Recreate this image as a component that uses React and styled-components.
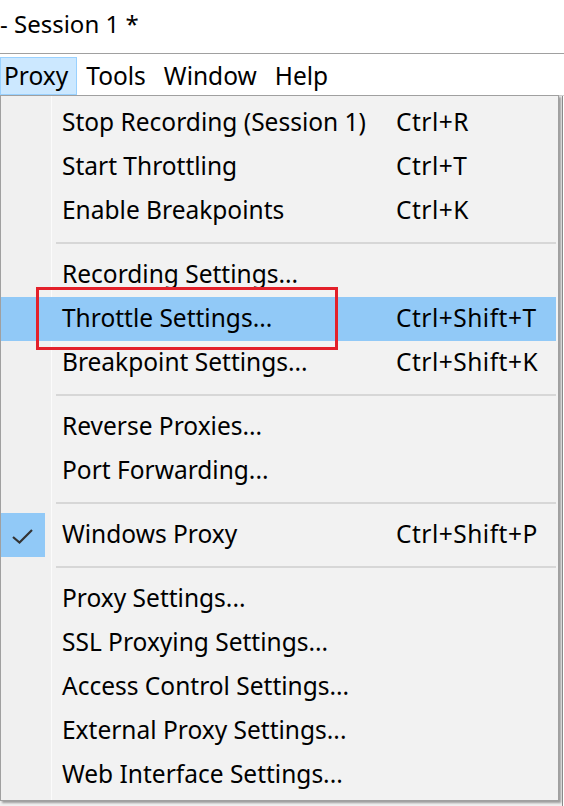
import React from "react";
import styled, { createGlobalStyle } from "styled-components";

const GlobalStyle = createGlobalStyle`
  html, body { margin: 0; padding: 0; background: #ffffff; }
  body { font-family: "Noto Sans", "Open Sans", sans-serif; color: #000; }
  * { box-sizing: border-box; }
`;

const Page = styled.div`
  position: relative;
  width: 564px;
  height: 806px;
  overflow: hidden;
  background: #ffffff;
`;

const TitleBar = styled.div`
  height: 54px;
  border-bottom: 1px solid #a0a0a0;
  display: flex;
  align-items: center;
  padding-left: 0;
  padding-bottom: 6px;
  font-size: 24px;
  white-space: pre;
`;

const MenuBar = styled.div`
  height: 41px;
  display: flex;
  align-items: flex-end;
  background: #ffffff;
`;

const MenuBarItem = styled.div`
  height: 38px;
  display: flex;
  align-items: center;
  padding: 0 ${(p) => p.$pad || 8}px 1px ${(p) => p.$padl || 8}px;
  font-size: 24.5px;
  border: 1px solid ${(p) => (p.$active ? "#99d1ff" : "transparent")};
  background: ${(p) => (p.$active ? "#cce8ff" : "transparent")};
`;

const Workspace = styled.div`
  display: flex;
  align-items: flex-start;
  background: #f0f0f0;
  height: 711px;
  border-top: 1px solid #d0d0d0;
`;

const Menu = styled.div`
  width: 559px;
  border: 1px solid #a0a0a0;
  box-shadow: 2px 2px 2px rgba(0, 0, 0, 0.35);
  padding: 5px 2px 3px 0;
  margin-top: -1px;
  background: linear-gradient(
    to right,
    #f0f0f0 0 50px,
    #fbfbfb 50px 51px,
    #f2f2f2 51px
  );
  font-size: 24.5px;
`;

const Item = styled.div`
  height: 44px;
  display: grid;
  grid-template-columns: 44px 17px 334px 1fr;
  align-items: center;
  background: ${(p) => (p.$hover ? "#91c9f7" : "transparent")};
  white-space: nowrap;
  line-height: 1;
  padding-bottom: 1px;
`;

const CheckBox = styled.div`
  width: 44px;
  height: 44px;
  margin-bottom: -1px;
  display: flex;
  align-items: center;
  justify-content: center;
  background: ${(p) => (p.$on ? "#91c9f7" : "transparent")};
`;

const Label = styled.span`
  grid-column: 3;
`;

const Shortcut = styled.span`
  grid-column: 4;
  letter-spacing: 0.5px;
`;

const Separator = styled.div`
  height: 20px;
  display: flex;
  align-items: center;
  padding-left: 55px;
  &::after {
    content: "";
    flex: 1;
    height: 2px;
    background: #d7d7d7;
  }
`;

const SideStrip = styled.div`
  flex: 1;
  align-self: stretch;
  border-left: 1px solid #8a8a8a;
  margin-left: 3px;
  background: #ffffff;
`;

const Annotation = styled.div`
  position: absolute;
  left: 36px;
  top: 287px;
  width: 302px;
  height: 63px;
  border: 3px solid #e3202a;
  pointer-events: none;
`;

const Check = () => (
  <svg width="44" height="44" viewBox="0 0 44 44">
    <polyline
      points="12,24 18.5,29.5 31,17"
      fill="none"
      stroke="#333"
      strokeWidth="2.2"
    />
  </svg>
);

const groups = [
  [
    ["Stop Recording (Session 1)", "Ctrl+R"],
    ["Start Throttling", "Ctrl+T"],
    ["Enable Breakpoints", "Ctrl+K"],
  ],
  [
    ["Recording Settings...", ""],
    ["Throttle Settings...", "Ctrl+Shift+T", "hover"],
    ["Breakpoint Settings...", "Ctrl+Shift+K"],
  ],
  [
    ["Reverse Proxies...", ""],
    ["Port Forwarding...", ""],
  ],
  [["Windows Proxy", "Ctrl+Shift+P", "check"]],
  [
    ["Proxy Settings...", ""],
    ["SSL Proxying Settings...", ""],
    ["Access Control Settings...", ""],
    ["External Proxy Settings...", ""],
    ["Web Interface Settings...", ""],
  ],
];

export default function App() {
  return (
    <>
      <GlobalStyle />
      <Page>
        <TitleBar>- Session 1 *</TitleBar>
        <MenuBar>
          <MenuBarItem $active $padl={3} $pad={8}>Proxy</MenuBarItem>
          <MenuBarItem>Tools</MenuBarItem>
          <MenuBarItem>Window</MenuBarItem>
          <MenuBarItem>Help</MenuBarItem>
        </MenuBar>
        <Workspace>
          <Menu>
            {groups.map((g, gi) => (
              <React.Fragment key={gi}>
                {gi > 0 && <Separator />}
                {g.map(([label, sc, flag]) => (
                  <Item key={label} $hover={flag === "hover"}>
                    <CheckBox $on={flag === "check"}>
                      {flag === "check" && <Check />}
                    </CheckBox>
                    <Label>{label}</Label>
                    <Shortcut>{sc}</Shortcut>
                  </Item>
                ))}
              </React.Fragment>
            ))}
          </Menu>
          <SideStrip />
        </Workspace>
        <Annotation />
      </Page>
    </>
  );
}
